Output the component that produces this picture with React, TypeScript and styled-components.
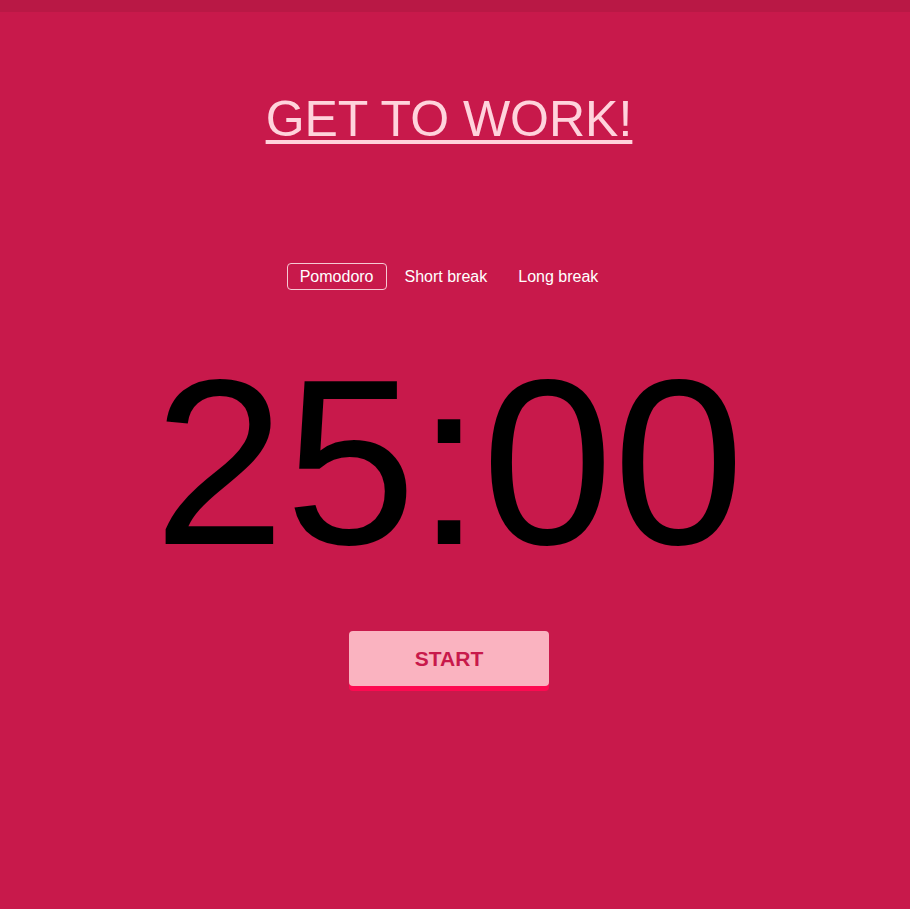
import React, { useState } from "react";
import styled, { createGlobalStyle } from "styled-components";

const GlobalStyle = createGlobalStyle`
  html, body {
    margin: 0;
    padding: 0;
    background: #c8194b;
  }
  body {
    font-family: "Liberation Sans", Arial, sans-serif;
  }
`;

const Page = styled.div`
  min-height: 909px;
  background: #c8194b;
  display: flex;
  flex-direction: column;
  align-items: center;
`;

const TopBar = styled.div`
  align-self: stretch;
  height: 12px;
  background: #b91845;
`;

const Content = styled.main`
  align-self: stretch;
  padding-right: 12px;
  display: flex;
  flex-direction: column;
  align-items: center;
`;

const Title = styled.h1`
  margin: 78px 0 0;
  font-size: 50px;
  font-weight: 400;
  line-height: normal;
  color: #ffd3dc;
  text-decoration: underline;
  text-decoration-thickness: 4px;
  text-underline-offset: 4px;
`;

const Tabs = styled.div`
  margin-top: 115px;
  display: flex;
  gap: 5px;
`;

const Tab = styled.button<{ $active?: boolean }>`
  font-family: "Liberation Sans", Arial, sans-serif;
  font-size: 16px;
  line-height: 17px;
  padding: 4px 12px;
  color: #ffffff;
  background: transparent;
  border: 1px solid ${(p) => (p.$active ? "#f6c9d3" : "transparent")};
  border-radius: 4px;
  cursor: pointer;
`;

const Timer = styled.div`
  margin-top: 36px;
  font-size: 236px;
  line-height: normal;
  color: #000000;
`;

const StartButton = styled.button`
  margin-top: 33px;
  width: 200px;
  height: 55px;
  border: none;
  border-radius: 4px;
  background: #fab3c0;
  color: #c8194b;
  font-family: "Liberation Sans", Arial, sans-serif;
  font-weight: 700;
  font-size: 21px;
  box-shadow: 0 5px 0 #fd0a51;
  cursor: pointer;
`;

export default function App() {
  const [mode, setMode] = useState("Pomodoro");
  const modes = ["Pomodoro", "Short break", "Long break"];
  return (
    <>
      <GlobalStyle />
      <Page>
        <TopBar />
        <Content>
          <Title>GET TO WORK!</Title>
          <Tabs>
            {modes.map((m) => (
              <Tab key={m} $active={m === mode} onClick={() => setMode(m)}>
                {m}
              </Tab>
            ))}
          </Tabs>
          <Timer>25:00</Timer>
          <StartButton>START</StartButton>
        </Content>
      </Page>
    </>
  );
}
